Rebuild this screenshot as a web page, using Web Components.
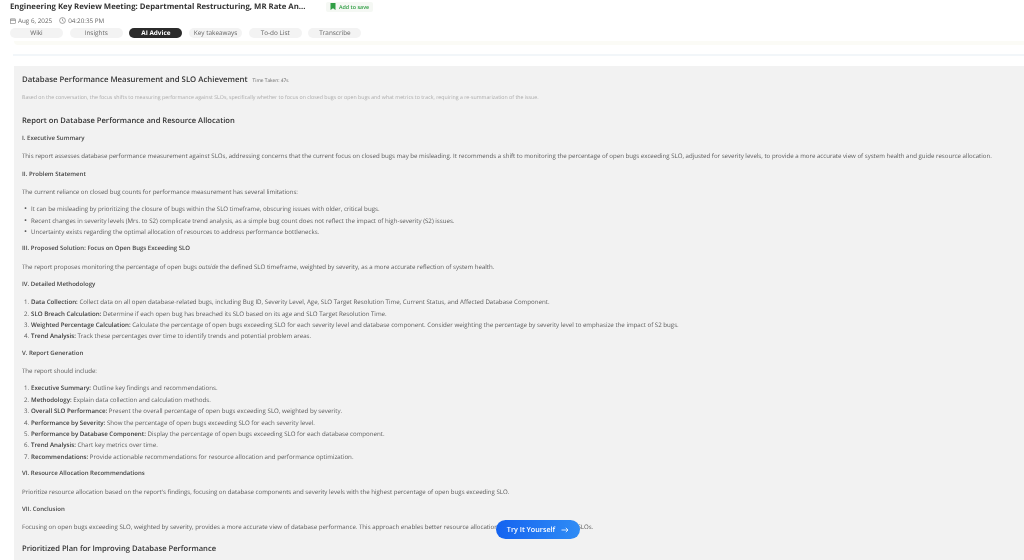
<!DOCTYPE html>
<html>
<head>
<meta charset="utf-8">
<style>
  html, body { margin: 0; height: 560px; overflow: hidden; background: #fff; }
  body { font-family: "Open Sans", "Liberation Sans", sans-serif; text-rendering: geometricPrecision; }
</style>
</head>
<body>
<meeting-header title-text="Engineering Key Review Meeting: Departmental Restructuring, MR Rate An..." date="Aug 6, 2025" time="04:20:35 PM">
  <tab-pill>Wiki</tab-pill>
  <tab-pill>Insights</tab-pill>
  <tab-pill active>AI Advice</tab-pill>
  <tab-pill>Key takeaways</tab-pill>
  <tab-pill>To-do List</tab-pill>
  <tab-pill>Transcribe</tab-pill>
</meeting-header>
<report-panel heading="Database Performance Measurement and SLO Achievement" taken="Time Taken: 47s" summary="Based on the conversation, the focus shifts to measuring performance against SLOs, specifically whether to focus on closed bugs or open bugs and what metrics to track, requiring a re-summarization of the issue.">
  <report-title>Report on Database Performance and Resource Allocation</report-title>
  <report-section>I. Executive Summary</report-section>
  <report-text>This report assesses database performance measurement against SLOs, addressing concerns that the current focus on closed bugs may be misleading. It recommends a shift to monitoring the percentage of open bugs exceeding SLO, adjusted for severity levels, to provide a more accurate view of system health and guide resource allocation.</report-text>
  <report-section>II. Problem Statement</report-section>
  <report-text>The current reliance on closed bug counts for performance measurement has several limitations:</report-text>
  <report-list>
    <report-item>It can be misleading by prioritizing the closure of bugs within the SLO timeframe, obscuring issues with older, critical bugs.</report-item>
    <report-item>Recent changes in severity levels (Mrs. to S2) complicate trend analysis, as a simple bug count does not reflect the impact of high-severity (S2) issues.</report-item>
    <report-item>Uncertainty exists regarding the optimal allocation of resources to address performance bottlenecks.</report-item>
  </report-list>
  <report-section>III. Proposed Solution: Focus on Open Bugs Exceeding SLO</report-section>
  <report-text>The report proposes monitoring the percentage of open bugs <i>outside</i> the defined SLO timeframe, weighted by severity, as a more accurate reflection of system health.</report-text>
  <report-section>IV. Detailed Methodology</report-section>
  <report-list>
    <report-item marker="1."><b>Data Collection:</b> Collect data on all open database-related bugs, including Bug ID, Severity Level, Age, SLO Target Resolution Time, Current Status, and Affected Database Component.</report-item>
    <report-item marker="2."><b>SLO Breach Calculation:</b> Determine if each open bug has breached its SLO based on its age and SLO Target Resolution Time.</report-item>
    <report-item marker="3."><b>Weighted Percentage Calculation:</b> Calculate the percentage of open bugs exceeding SLO for each severity level and database component. Consider weighting the percentage by severity level to emphasize the impact of S2 bugs.</report-item>
    <report-item marker="4."><b>Trend Analysis:</b> Track these percentages over time to identify trends and potential problem areas.</report-item>
  </report-list>
  <report-section>V. Report Generation</report-section>
  <report-text>The report should include:</report-text>
  <report-list>
    <report-item marker="1."><b>Executive Summary:</b> Outline key findings and recommendations.</report-item>
    <report-item marker="2."><b>Methodology:</b> Explain data collection and calculation methods.</report-item>
    <report-item marker="3."><b>Overall SLO Performance:</b> Present the overall percentage of open bugs exceeding SLO, weighted by severity.</report-item>
    <report-item marker="4."><b>Performance by Severity:</b> Show the percentage of open bugs exceeding SLO for each severity level.</report-item>
    <report-item marker="5."><b>Performance by Database Component:</b> Display the percentage of open bugs exceeding SLO for each database component.</report-item>
    <report-item marker="6."><b>Trend Analysis:</b> Chart key metrics over time.</report-item>
    <report-item marker="7."><b>Recommendations:</b> Provide actionable recommendations for resource allocation and performance optimization.</report-item>
  </report-list>
  <report-section>VI. Resource Allocation Recommendations</report-section>
  <report-text>Prioritize resource allocation based on the report's findings, focusing on database components and severity levels with the highest percentage of open bugs exceeding SLO.</report-text>
  <report-section>VII. Conclusion</report-section>
  <report-text>Focusing on open bugs exceeding SLO, weighted by severity, provides a more accurate view of database performance. This approach enables better resource allocation and drives toward meeting SLOs.</report-text>
  <report-title>Prioritized Plan for Improving Database Performance</report-title>
</report-panel>
<try-button>Try It Yourself</try-button>

<script>
function define(name, css, html, setup) {
  customElements.define(name, class extends HTMLElement {
    constructor() {
      super();
      this.attachShadow({ mode: 'open' }).innerHTML = `<style>${css}</style>${html}`;
    }
    connectedCallback() {
      if (setup) setup(this, this.shadowRoot);
    }
  });
}

define('tab-pill', `
  :host {
    display: block;
    width: 53px;
    height: 10px;
    line-height: 10px;
    border-radius: 5px;
    background: #f3f3f3;
    color: #666;
    font-size: 6.4px;
    text-align: center;
    white-space: nowrap;
  }
  :host([active]) { background: #2b2b2b; color: #fff; font-weight: 700; }
`, `<slot></slot>`);

define('meeting-header', `
  :host { display: block; padding: 0 0 0 10px; height: 41px; filter: blur(.3px); }
  .top { display: flex; align-items: center; height: 13px; }
  h1 { margin: 0; font-size: 7.77px; font-weight: 700; color: #333; white-space: nowrap; }
  .save {
    display: flex; align-items: center; gap: 2.5px;
    margin-left: 21px; height: 10px; padding: 0 4px;
    background: #f5f8f4; border-radius: 2px;
    color: #2f9e44; font-size: 5.4px; font-weight: 600; white-space: nowrap;
  }
  .meta { display: flex; align-items: center; gap: 7px; height: 15px; color: #666; font-size: 6.3px; }
  .meta span { display: flex; align-items: center; gap: 2px; }
  .meta i { font-style: normal; }
  .tabs { display: flex; gap: 6.7px; }
  svg { display: block; }
`, `
  <div class="top">
    <h1 id="title"></h1>
    <div class="save">
      <svg width="6" height="7" viewBox="0 0 6 7"><path d="M.5 0h5v7L3 5.2.5 7z" fill="#2f9e44"/></svg>
      Add to save
    </div>
  </div>
  <div class="meta">
    <span>
      <svg width="6" height="6" viewBox="0 0 12 12" fill="none" stroke="#666"><rect x="1" y="2" width="10" height="9"/><path d="M1 5h10M4 .5v3M8 .5v3"/></svg>
      <i id="date"></i>
    </span>
    <span>
      <svg width="7" height="7" viewBox="0 0 12 12" fill="none" stroke="#666"><circle cx="6" cy="6" r="5"/><path d="M6 3v3.2l2 1.2"/></svg>
      <i id="time"></i>
    </span>
  </div>
  <div class="tabs"><slot></slot></div>
`, (el, root) => {
  root.getElementById('title').textContent = el.getAttribute('title-text');
  root.getElementById('date').textContent = el.getAttribute('date');
  root.getElementById('time').textContent = el.getAttribute('time');
});

define('report-panel', `
  :host { display: block; padding-left: 13px; }
  .band1 { height: 4px; margin-left: 1px; background: #fbfbf6; border-radius: 0 0 0 4px; }
  .band2 { height: 2px; margin-top: 9px; background: #f2f6f9; }
  .card { margin: 10px 0 0 1px; padding: 7px 7px 0 8px; background: #f2f2f2; color: #5a5a5a; height: 600px; filter: blur(.35px); }
  .head { display: flex; align-items: baseline; gap: 5px; height: 14px; line-height: 14px; }
  h2 { margin: 0; font-size: 7.8px; font-weight: 600; color: #333; white-space: nowrap; }
  .taken { font-size: 4.8px; color: #666; }
  .summary { margin: 4px 0 0; font-size: 5.26px; line-height: 12px; color: #aaa; white-space: nowrap; }
`, `
  <div class="band1"></div>
  <div class="band2"></div>
  <div class="card">
    <div class="head"><h2 id="h"></h2><span class="taken" id="t"></span></div>
    <p class="summary" id="s"></p>
    <slot></slot>
  </div>
`, (el, root) => {
  root.getElementById('h').textContent = el.getAttribute('heading');
  root.getElementById('t').textContent = el.getAttribute('taken');
  root.getElementById('s').textContent = el.getAttribute('summary');
});

define('report-title', `
  :host { display: block; margin: 10.5px 0 -2px; font-size: 7.6px; line-height: 14px; font-weight: 600; color: #333; white-space: nowrap; }
  :host(:last-child) { margin-top: 9.8px; }
`, `<slot></slot>`);

define('report-section', `
  :host { display: block; margin-top: 7.3px; font-size: 6.05px; line-height: 11px; font-weight: 600; color: #444; white-space: nowrap; }
`, `<slot></slot>`);

define('report-text', `
  :host { display: block; margin-top: 6.5px; font-size: 6.12px; line-height: 11px; color: #5a5a5a; white-space: nowrap; }
`, `<slot></slot>`);

define('report-list', `
  :host { display: block; margin: 6.1px 0 -1.1px; }
`, `<slot></slot>`);

define('report-item', `
  :host { display: flex; font-size: 6.15px; line-height: 11.35px; color: #5a5a5a; white-space: nowrap; }
  .mark { width: 9px; flex: none; text-align: right; padding-right: 2px; box-sizing: border-box; }
  :host(:not([marker])) .mark { padding-right: 4px; font-size: 8px; }
  ::slotted(b) { font-weight: 600; color: #3a3a3a; }
`, `<span class="mark" id="m"></span><span><slot></slot></span>`, (el, root) => {
  root.getElementById('m').textContent = el.getAttribute('marker') || '•';
});

define('try-button', `
  :host {
    position: fixed; left: 496px; top: 520px;
    display: flex; align-items: center; justify-content: center; gap: 6px;
    width: 84px; height: 19px; border-radius: 10px;
    background: linear-gradient(90deg, #1463f0, #2f8cf5);
    color: #fff; font-size: 7.2px; font-weight: 600;
    filter: blur(.25px);
  }
`, `<slot></slot><svg width="8" height="6" viewBox="0 0 8 6" fill="none" stroke="#fff" stroke-width=".8"><path d="M.5 3h6.5M4.8 .8 7 3 4.8 5.2"/></svg>`);
</script>
</body>
</html>
